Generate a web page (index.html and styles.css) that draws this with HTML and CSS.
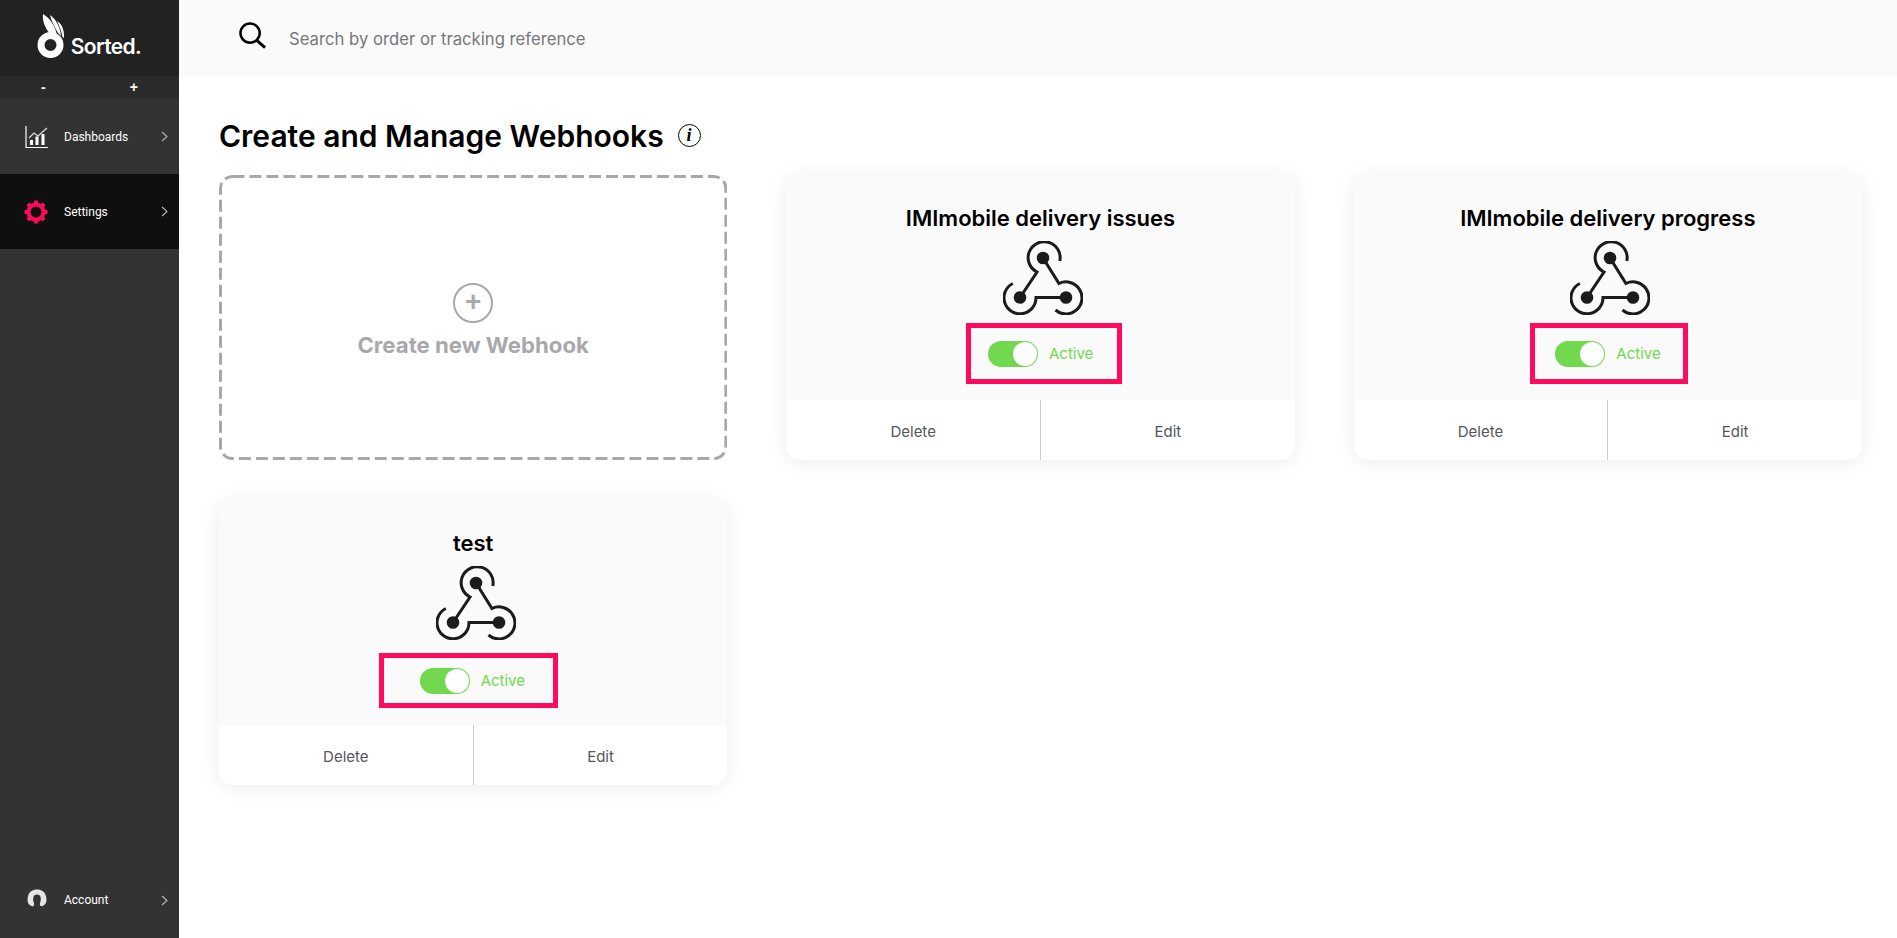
FILE: index.html
```html
<!DOCTYPE html>
<html lang="en">
<head>
  <meta charset="UTF-8" />
  <title>Create and Manage Webhooks</title>
  <link rel="stylesheet" href="styles.css">
</head>
<body>
  <svg class="sprite" width="0" height="0">
    <symbol id="hook" viewBox="0 0 80 74">
      <g fill="none" stroke="#1b1b1b" stroke-width="3">
        <path d="M56.8 20 A16 16 0 1 0 34 31 L17 56.5" />
        <path d="M9.8 42.5 A16 16 0 1 0 33 56.5 L63 56.5" />
        <path d="M52.5 69 A16 16 0 1 0 56 42.5 L40 17" />
      </g>
      <circle cx="40" cy="17" r="6.3" fill="#1b1b1b" />
      <circle cx="17" cy="56.5" r="6.3" fill="#1b1b1b" />
      <circle cx="63" cy="56.5" r="6.3" fill="#1b1b1b" />
    </symbol>
    <symbol id="chev" viewBox="0 0 7 11">
      <path d="M1 1 L6 5.5 L1 10" fill="none" stroke="#b5b5b5" stroke-width="1.1" />
    </symbol>
  </svg>

  <aside class="sidebar">
    <div class="logo">
      <svg class="logo-mark" width="28" height="48" viewBox="0 0 28 48">
        <path d="M6 2 C5 10 9 18 15 24 L20 23 C18 14 13 6 6 2Z" fill="#fff" />
        <path d="M13 3 C14 8 17 14 21 21 L24 24 C23 15 19 7 13 3Z" fill="#fff" />
        <path d="M20 9 C22 13 24 18 25.500 25 L27 26 C27.500 18 25 12 20 9Z" fill="#fff" />
        <circle cx="13.5" cy="33" r="9.5" fill="none" stroke="#fff" stroke-width="7" />
      </svg>
      <span class="logo-text">Sorted.</span>
    </div>
    <div class="zoom-row"><span>-</span><span>+</span></div>
    <a class="nav-item">
      <svg class="nav-icon" width="24" height="24" viewBox="0 0 24 24">
        <path d="M1 1 V22.5 H23" fill="none" stroke="#fff" stroke-width="1.2" />
        <path d="M4 13 L9 8 L13 11 L22 3" fill="none" stroke="#ddd" stroke-width="1.2" />
        <path d="M5 20 V15 H8 V20Z M10.5 20 V11.5 H13.5 V20Z M16.5 20 V9 H19.5 V20Z" fill="#fff" />
      </svg>
      <span class="nav-label">Dashboards</span>
      <svg class="chev" width="7" height="11"><use href="#chev" /></svg>
    </a>
    <a class="nav-item nav-active">
      <svg class="nav-icon gear" width="24" height="24" viewBox="0 0 24 24">
        <circle cx="12" cy="12" r="7.5" fill="none" stroke="#ff0a5c" stroke-width="4" />
        <g stroke="#ff0a5c" stroke-width="4">
          <path d="M12 0.5 V4 M12 20 V23.5 M0.5 12 H4 M20 12 H23.5" />
          <path d="M3.9 3.9 L6.3 6.3 M17.7 17.7 L20.1 20.1 M3.9 20.1 L6.3 17.7 M17.7 6.3 L20.1 3.9" />
        </g>
      </svg>
      <span class="nav-label">Settings</span>
      <svg class="chev" width="7" height="11"><use href="#chev" /></svg>
    </a>
    <a class="nav-item nav-bottom">
      <svg class="nav-icon account" width="22" height="18" viewBox="0 0 24 20">
        <path d="M6 19 C1 17 1 12 2 8 C3 3 7 0.500 12 0.500 C17 0.500 21 3 22 8 C23 12 23 17 18 19 C16 20 14.500 18 15.500 15 C17 11 16.500 6 12 6 C7.500 6 7 11 8.500 15 C9.500 18 8 20 6 19Z" fill="#e6e6e6" />
      </svg>
      <span class="nav-label">Account</span>
      <svg class="chev" width="7" height="11"><use href="#chev" /></svg>
    </a>
  </aside>

  <div class="main">
    <header class="topbar">
      <svg class="search-icon" width="27" height="27" viewBox="0 0 28 28">
        <circle cx="11.500" cy="11.500" r="10" fill="none" stroke="#000" stroke-width="2.600" />
        <path d="M18.500 19 L27 26.500" stroke="#000" stroke-width="3" />
      </svg>
      <span class="search-text">Search by order or tracking reference</span>
    </header>

    <div class="content">
      <div class="title-row">
        <h1>Create and Manage Webhooks</h1>
        <span class="info">i</span>
      </div>

      <div class="grid">
        <div class="card-new">
          <svg class="dash" viewBox="0 0 509 285" preserveAspectRatio="none">
            <rect x="1.500" y="1.500" width="506" height="282" rx="12" fill="none" stroke="#a8a8ac" stroke-width="3" stroke-dasharray="12 5" />
          </svg>
          <span class="plus">+</span>
          <span class="new-label">Create new Webhook</span>
        </div>

        <div class="card">
          <div class="card-head">
            <h2>IMImobile delivery issues</h2>
            <svg class="hook" width="80" height="74"><use href="#hook" /></svg>
            <div class="mark mark-issues">
              <span class="toggle"></span><span class="state">Active</span>
            </div>
          </div>
          <div class="card-foot"><a>Delete</a><a>Edit</a></div>
        </div>

        <div class="card">
          <div class="card-head">
            <h2>IMImobile delivery progress</h2>
            <svg class="hook" width="80" height="74"><use href="#hook" /></svg>
            <div class="mark mark-progress">
              <span class="toggle"></span><span class="state">Active</span>
            </div>
          </div>
          <div class="card-foot"><a>Delete</a><a>Edit</a></div>
        </div>

        <div class="card">
          <div class="card-head">
            <h2>test</h2>
            <svg class="hook" width="80" height="74"><use href="#hook" /></svg>
            <div class="mark mark-test">
              <span class="toggle"></span><span class="state">Active</span>
            </div>
          </div>
          <div class="card-foot"><a>Delete</a><a>Edit</a></div>
        </div>
      </div>
    </div>
  </div>
</body>
</html>
```

FILE: styles.css
```css
* {
  box-sizing: border-box;
}
body {
  margin: 0;
  display: flex;
  height: 100vh;
  overflow: hidden;
  font-family: "Inter", "Noto Sans", sans-serif;
  background: #fff;
  color: #000;
}
.sprite {
  position: absolute;
}
.sidebar {
  width: 179px;
  flex-shrink: 0;
  display: flex;
  flex-direction: column;
  background: #333;
  color: #fff;
}
.logo {
  height: 76px;
  background: #222;
  display: flex;
  align-items: flex-end;
  justify-content: center;
  gap: 6px;
  padding: 0 0 16px 0;
}
.logo-mark {
  margin-left: -1px;
}
.logo-text {
  font-size: 21px;
  font-weight: 600;
  line-height: 24px;
  letter-spacing: -0.6px;
  margin-bottom: 1px;
}
.zoom-row {
  height: 23px;
  background: #2b2b2b;
  display: flex;
  justify-content: space-between;
  padding: 0 41px 0 41px;
  font-family: "Liberation Sans", sans-serif;
  font-size: 14px;
  font-weight: bold;
  line-height: 23px;
}
.nav-item {
  height: 75px;
  display: flex;
  align-items: center;
  padding: 0 11px 0 25px;
  background: #333;
}
.nav-active {
  background: #0f0f0f;
}
.nav-bottom {
  margin-top: auto;
  height: 76px;
}
.nav-icon {
  flex-shrink: 0;
  margin-right: 15px;
}
.gear {
  margin-left: -1px;
  margin-right: 16px;
}
.account {
  margin-left: 1px;
  margin-right: 16px;
  margin-bottom: 4px;
}
.nav-label {
  flex: 1;
  font-family: "Roboto", sans-serif;
  font-size: 12px;
}
.main {
  flex: 1;
  min-width: 0;
}
.topbar {
  height: 76px;
  background: #fafafa;
  display: flex;
  align-items: center;
  gap: 23px;
  padding: 2px 0 0 60px;
}
.search-icon {
  margin-bottom: 8px;
}
.search-text {
  font-size: 16.7px;
  color: #77777c;
}
.content {
  padding: 0 35px 0 40px;
}
.title-row {
  height: 99px;
  display: flex;
  align-items: center;
  gap: 14px;
  padding-top: 20px;
}
h1 {
  margin: 0;
  font-size: 30px;
  font-weight: 600;
}
.info {
  width: 23px;
  height: 23px;
  border: 1.5px solid #000;
  border-radius: 50%;
  text-align: center;
  font-family: "Liberation Serif", serif;
  font-size: 18px;
  font-style: italic;
  font-weight: bold;
  line-height: 20px;
}
.grid {
  display: grid;
  grid-template-columns: repeat(3, 1fr);
  grid-auto-rows: 285px;
  column-gap: 59px;
  row-gap: 40px;
}
.card-new {
  position: relative;
  display: flex;
  flex-direction: column;
  align-items: center;
  justify-content: center;
  color: #a8a8ac;
  padding-top: 6px;
}
.dash {
  position: absolute;
  top: 0;
  left: 0;
  width: 100%;
  height: 100%;
}
.plus {
  width: 40px;
  height: 40px;
  border: 2.5px solid #a8a8ac;
  border-radius: 50%;
  text-align: center;
  font-family: "Liberation Sans", sans-serif;
  font-size: 28px;
  font-weight: bold;
  line-height: 33px;
}
.new-label {
  margin-top: 8px;
  font-size: 22.2px;
  font-weight: 700;
}
.card {
  display: flex;
  flex-direction: column;
  border-radius: 14px;
  overflow: hidden;
  background: #fff;
  box-shadow: 0 2px 20px rgba(0,0,0,0.08);
}
.card-head {
  height: 225px;
  background: #fafafa;
  display: flex;
  flex-direction: column;
  align-items: center;
  padding-top: 28px;
}
h2 {
  margin: 0;
  font-size: 22px;
  font-weight: 600;
  line-height: 30px;
}
.hook {
  display: block;
  margin: 8px 0 0 5px;
}
.mark {
  height: 61px;
  margin-top: 8px;
  border: 5px solid #ff0a5c;
  display: flex;
  align-items: center;
  gap: 11px;
}
.mark-issues {
  width: 156px;
  margin-left: 7px;
  padding-left: 17px;
}
.mark-progress {
  width: 158px;
  margin-left: 3px;
  padding-left: 20px;
}
.mark-test {
  width: 179px;
  height: 55px;
  margin-top: 13px;
  margin-left: -10px;
  padding-left: 36px;
}
.toggle {
  position: relative;
  width: 50px;
  height: 26px;
  border-radius: 13px;
  background: #72d84f;
}
.toggle::after {
  content: "";
  position: absolute;
  top: 1px;
  right: 1px;
  width: 24px;
  height: 24px;
  border-radius: 50%;
  background: #fff;
}
.state {
  font-size: 15px;
  color: #72d84f;
}
.card-foot {
  flex: 1;
  display: flex;
}
.card-foot a {
  flex: 1;
  display: flex;
  align-items: center;
  justify-content: center;
  padding-top: 2px;
  font-size: 15px;
  color: #55555c;
}
.card-foot a + a {
  border-left: 1px solid #ccc;
}
```
